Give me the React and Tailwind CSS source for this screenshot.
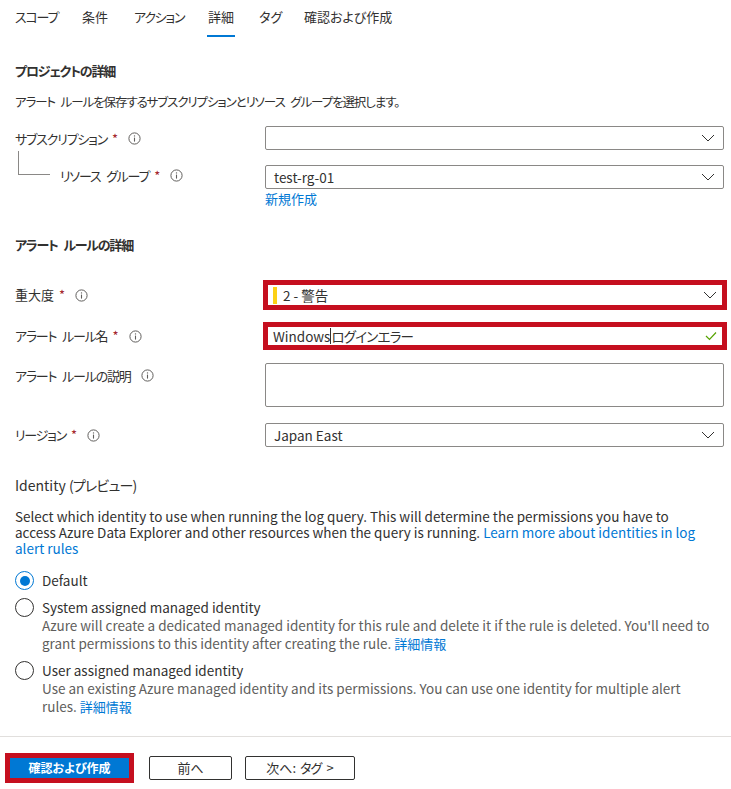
import React from 'react';

const Info = () => (
  <svg width="13" height="13" viewBox="0 0 13 13" className="shrink-0">
    <circle cx="6.5" cy="6.5" r="5.6" fill="none" stroke="#605e5c" strokeWidth="1" />
    <line x1="6.5" y1="5.6" x2="6.5" y2="9.6" stroke="#605e5c" strokeWidth="1.1" />
    <circle cx="6.5" cy="3.9" r="0.7" fill="#605e5c" />
  </svg>
);

const Chevron = () => (
  <svg width="14" height="8" viewBox="0 0 14 8" className="shrink-0">
    <polyline points="1,1 7,7 13,1" fill="none" stroke="#323130" strokeWidth="1" />
  </svg>
);

const Req = () => <span className="text-[#a4262c] ml-[5px] tracking-normal">*</span>;

const Label = ({ text, req, tight, className = '' }) => (
  <div className={`flex items-center text-[13px] text-[#323130] ${className}`}>
    <span className={tight ? 'tracking-[-1.2px] [word-spacing:4px]' : ''}>{text}</span>
    {req && <Req />}
    <span className="ml-[10px] flex items-center"><Info /></span>
  </div>
);

const Select = ({ value }) => (
  <div className="h-[24px] w-[459px] shrink-0 border border-[#8a8886] rounded-[2px] flex items-center justify-between pl-[8px] pr-[8px] text-[13.5px] text-[#323130]">
    <span>{value}</span>
    <Chevron />
  </div>
);

const Radio = ({ checked, label, desc, link }) => (
  <div className="flex items-start gap-[8px]">
    <div className={`w-[19px] h-[19px] rounded-full border flex items-center justify-center shrink-0 bg-white ${checked ? 'border-[#0078d4]' : 'border-[#323130]'}`}>
      {checked && <div className="w-[10px] h-[10px] rounded-full bg-[#0078d4]" />}
    </div>
    <div className="text-[13.5px] leading-[18px]">
      <div className="text-[#323130]">{label}</div>
      {desc && (
        <div className="text-[#605e5c]">
          {desc} {link && <span className="text-[#0078d4] text-[13px]">{link}</span>}
        </div>
      )}
    </div>
  </div>
);

const tabs = [
  { t: 'スコープ', w: 'w-[42px]' },
  { t: '条件', w: 'w-[27px]' },
  { t: 'アクション', w: 'w-[49px]' },
  { t: '詳細', w: 'w-[26px]' },
  { t: 'タグ', w: 'w-[20px]' },
  { t: '確認および作成', w: 'w-[88px]' },
];

export default function App() {
  return (
    <div
      className="w-[731px] h-[789px] bg-white overflow-hidden text-[#323130] [font-feature-settings:'palt']"
      style={{ fontFamily: '"Noto Sans CJK JP", "Noto Sans", sans-serif' }}
    >
      <div className="flex gap-[25px] px-[15px] h-[37px] items-stretch">
        {tabs.map(({ t, w }) => (
          <div key={t} className={`relative flex items-center pb-[3px] text-[13px] text-[#323130] whitespace-nowrap ${w} ${t.length > 2 && t !== '確認および作成' ? 'tracking-[-1.2px]' : ''}`}>
            {t}
            {t === '詳細' && <div className="absolute left-[-1px] right-[-1px] bottom-0 h-[2px] bg-[#0078d4]" />}
          </div>
        ))}
      </div>

      <div className="px-[15px] w-[731px]">
        <div className="mt-[25px] text-[13px] font-bold leading-[18px] tracking-[-1.2px]">プロジェクトの詳細</div>
        <div className="mt-[13px] text-[12.5px] leading-[18px] tracking-[-1.1px] [word-spacing:4px]">アラート ルールを保存するサブスクリプションとリソース グループを選択します。</div>

        <div className="mt-[15px] flex">
          <div className="w-[250px] shrink-0 pt-[3px]">
            <Label text="サブスクリプション" req tight />
            <div className="flex mt-[2px]">
              <div className="ml-[3px] w-[32px] h-[24px] border-l border-b border-[#8a8886]" />
              <Label text="リソース グループ" req tight className="ml-[10px] mt-[15px]" />
            </div>
          </div>
          <div>
            <Select value="" />
            <div className="mt-[15px]"><Select value="test-rg-01" /></div>
            <div className="text-[13px] text-[#0078d4] leading-[18px] mt-[1px]">新規作成</div>
          </div>
        </div>

        <div className="mt-[28px] text-[13px] font-bold leading-[18px] tracking-[-1.2px] [word-spacing:4px]">アラート ルールの詳細</div>

        <div className="mt-[26px] flex items-center">
          <div className="w-[248px] shrink-0"><Label text="重大度" req /></div>
          <div className="w-[464px] shrink-0 h-[30px] border-[5px] border-[#c50f1f] flex items-center justify-between pl-[5px] pr-[5px] text-[13.5px]">
            <div className="flex items-center">
              <div className="w-[4px] h-[17px] bg-[#fcd116]" />
              <span className="ml-[6px]">2 - 警告</span>
            </div>
            <Chevron />
          </div>
        </div>

        <div className="mt-[12px] flex items-center">
          <div className="w-[248px] shrink-0"><Label text="アラート ルール名" req tight /></div>
          <div className="w-[464px] shrink-0 h-[28px] border-[5px] border-[#c50f1f] flex items-center justify-between pl-[5px] pr-[5px] text-[13.5px]">
            <div className="flex items-center">
              <span>Windows</span>
              <span className="w-px h-[16px] bg-[#323130]" />
              <span className="tracking-[-0.8px]">ログインエラー</span>
            </div>
            <svg width="12" height="10" viewBox="0 0 12 10">
              <polyline points="1,5 4.5,8.5 11,1.5" fill="none" stroke="#57a300" strokeWidth="1.2" />
            </svg>
          </div>
        </div>

        <div className="mt-[13px] flex items-start">
          <div className="w-[250px] shrink-0 pt-[3px]"><Label text="アラート ルールの説明" tight /></div>
          <div className="w-[459px] shrink-0 h-[44px] border border-[#8a8886] rounded-[2px]" />
        </div>

        <div className="mt-[16px] flex items-center">
          <div className="w-[250px] shrink-0"><Label text="リージョン" req tight /></div>
          <Select value="Japan East" />
        </div>

        <div className="mt-[29px] text-[14px] leading-[18px]">
          Identity <span className="tracking-[-0.8px]">(プレビュー)</span>
        </div>
        <div className="mt-[14px] w-[705px] text-[13.5px] leading-[16px] text-[#323130]">
          Select which identity to use when running the log query. This will determine the permissions you have to
          <br />
          access Azure Data Explorer and other resources when the query is running.{' '}
          <span className="text-[#0078d4]">Learn more about identities in log alert rules</span>
        </div>

        <div className="mt-[15px] w-[701px] flex flex-col gap-[8px]">
          <Radio checked label="Default" />
          <Radio label="System assigned managed identity" desc="Azure will create a dedicated managed identity for this rule and delete it if the rule is deleted. You'll need to grant permissions to this identity after creating the rule." link="詳細情報" />
          <Radio label="User assigned managed identity" desc="Use an existing Azure managed identity and its permissions. You can use one identity for multiple alert rules." link="詳細情報" />
        </div>
      </div>

      <div className="mt-[20px] border-t border-[#e1dfdd]" />
      <div className="flex items-center px-[5px] mt-[16px]">
        <div className="w-[129px] h-[30px] border-[5px] border-[#c50f1f] bg-[#0078d4] flex items-center justify-center text-white text-[12px] font-bold">
          確認および作成
        </div>
        <div className="ml-[15px] w-[83px] h-[24px] border border-[#323130] rounded-[2px] flex items-center justify-center text-[13px]">前へ</div>
        <div className="ml-[13px] w-[110px] h-[24px] border border-[#323130] rounded-[2px] flex items-center justify-center text-[13px]">
          次へ: <span className="tracking-[-0.8px] ml-[4px]">タグ</span> <span className="ml-[5px]">&gt;</span>
        </div>
      </div>
    </div>
  );
}
